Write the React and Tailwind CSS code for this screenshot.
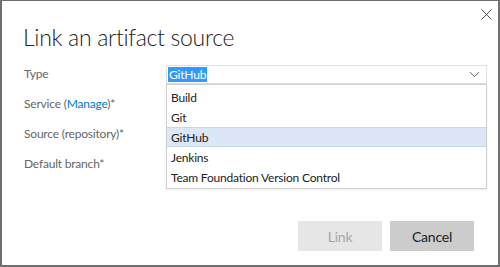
import { X, ChevronDown } from 'lucide-react';

const fields = ['Type', 'Service', 'Source (repository)*', 'Default branch*'];
const options = ['Build', 'Git', 'GitHub', 'Jenkins', 'Team Foundation Version Control'];

export default function App() {
  return (
    <div className="relative flex h-[267px] w-[500px] flex-col border-2 border-t border-[#6f6f6f] bg-white font-['Lato',sans-serif] text-[12px] tracking-[-0.2px] text-[#333]">
      <button className="absolute right-[2px] top-[4px] text-[#333]">
        <X size={19} strokeWidth={1.1} />
      </button>

      <h1 className="mt-[20px] pl-[21px] text-[23px] font-light leading-[32px] tracking-[-0.3px] text-[#222]">
        Link an artifact source
      </h1>

      <div className="relative mt-[6px] grid grid-cols-[142px_321px] pl-[22px]">
        {fields.map((f, i) => (
          <div key={f} className="contents">
            <div className="flex h-[30px] items-center text-[#666]">
              {f === 'Service' ? (
                <span>
                  Service (<span className="text-[#007acc]">Manage</span>)*
                </span>
              ) : (
                f
              )}
            </div>
            <div className="flex h-[30px] items-center">
              {i === 0 && (
                <div className="flex h-[19px] w-full items-center justify-between border border-[#e1e1e1] pl-[1px] pr-[3px]">
                  <span className="bg-[#3399ff] px-[1px] leading-[15px] text-white">GitHub</span>
                  <ChevronDown size={17} strokeWidth={1.2} className="text-[#444]" />
                </div>
              )}
            </div>
          </div>
        ))}

        <ul className="absolute left-[164px] top-[25px] w-[321px] border border-[#cfcfcf] bg-white pb-[1px] pt-[2px] shadow-[0_1px_2px_rgba(0,0,0,0.08)]">
          {options.map((o) => (
            <li
              key={o}
              className={
                o === 'GitHub'
                  ? 'flex h-[20px] items-center border-y border-[#c6d8ef] bg-[#dce6f4] px-[4px] pt-[2px] text-[#222]'
                  : 'flex h-[20px] items-center px-[4px] pt-[2px] text-[#222]'
              }
            >
              {o}
            </li>
          ))}
        </ul>
      </div>

      <div className="mt-auto flex justify-end gap-[8px] pb-[14px] pr-[24px]">
        <button className="h-[30px] w-[84px] bg-[#e6e6e6] text-[14px] text-[#a6a6a6]">Link</button>
        <button className="h-[30px] w-[84px] bg-[#cccccc] text-[14px] text-[#222]">Cancel</button>
      </div>
    </div>
  );
}
